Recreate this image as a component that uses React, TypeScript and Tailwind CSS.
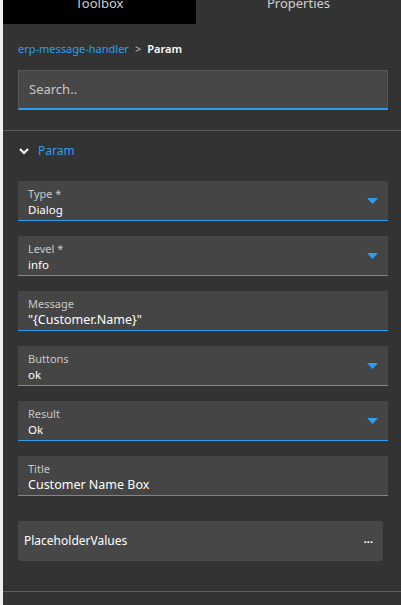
import React from "react";

const font = { fontFamily: '"Noto Sans", "Open Sans", sans-serif' };

function Caret() {
  return (
    <svg width="11" height="6" viewBox="0 0 11 6" className="shrink-0">
      <path d="M0 0 H11 L5.5 6 Z" fill="#2a9ff0" />
    </svg>
  );
}

function Field({
  label,
  value,
  select,
  big,
}: {
  label: string;
  value: string;
  select?: boolean;
  big?: boolean;
}) {
  return (
    <div className="flex h-[40px] w-[370px] items-center bg-[#454545] border-b border-[#2a9ff0] pl-[10px] pr-[10px]">
      <div className="flex h-full flex-1 flex-col pt-[5px]">
        <span className="text-[11px] leading-[15px] text-[#c8c8c8]">{label}</span>
        <span
          className={
            big
              ? "text-[12.5px] leading-[18px] text-white"
              : "text-[11.5px] leading-[18px] text-white"
          }
        >
          {value}
        </span>
      </div>
      {select && <Caret />}
    </div>
  );
}

export default function App() {
  return (
    <div className="flex h-[605px] w-[401px] bg-[#eef0f3]" style={font}>
      <div className="ml-[3px] flex flex-1 flex-col bg-[#333333]">
        <div className="flex h-[24px] overflow-hidden">
          <div className="w-[193px] bg-black text-center text-[13px] text-[#cfcfcf]">
            <span className="-mt-[5px] block leading-[16px]">Toolbox</span>
          </div>
          <div className="flex-1 text-center text-[13px] text-[#cfcfcf]">
            <span className="-mt-[5px] block leading-[16px]">Properties</span>
          </div>
        </div>
        <div className="flex items-center pl-[15px] pt-[17px] text-[11px] leading-[16px]">
          <span className="text-[#2a9ff0]">erp-message-handler</span>
          <span className="mx-[6px] text-[#bbbbbb]">&gt;</span>
          <span className="font-semibold text-white">Param</span>
        </div>
        <div className="mt-[13px] pl-[15px]">
          <div className="flex h-[40px] w-[370px] items-center border border-b-2 border-[#575757] border-b-[#2a9ff0] bg-[#474747] pl-[10px] text-[13px] text-[#c8c8c8]">
            Search..
          </div>
        </div>
        <div className="mt-[20px] h-[1px] bg-[#595959]" />
        <div className="flex items-center pl-[16px] pt-[12px] text-[12px] leading-[16px]">
          <svg width="10" height="7" viewBox="0 0 10 7" className="mr-[9px]">
            <path d="M1 1 L5 5 L9 1" stroke="white" strokeWidth="2" fill="none" />
          </svg>
          <span className="text-[#2a9ff0]">Param</span>
        </div>
        <div className="mt-[22px] flex flex-col gap-[15px] pl-[15px]">
          <Field label="Type *" value="Dialog" select />
          <Field label="Level *" value="info" select />
          <Field label="Message" value={'"{Customer.Name}"'} big />
          <Field label="Buttons" value="ok" select />
          <Field label="Result" value="Ok" select />
          <Field label="Title" value="Customer Name Box" big />
        </div>
        <div className="mt-[25px] pl-[15px]">
          <div className="flex h-[40px] w-[365px] items-center justify-between rounded-[3px] bg-[#474747] pl-[6px] pr-[10px] text-[12px] text-white">
            <span>PlaceholderValues</span>
            <span className="text-[11px] font-bold leading-none">···</span>
          </div>
        </div>
        <div className="mt-[30px] h-[1px] bg-[#5e5e5e]" />
      </div>
    </div>
  );
}
